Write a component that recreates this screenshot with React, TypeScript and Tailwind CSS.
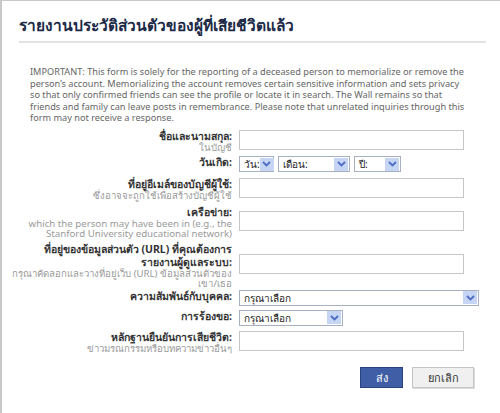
import React from "react";

const FONT = { fontFamily: 'Tahoma, "Noto Sans", "DejaVu Sans", sans-serif' };

function Arrow() {
  return (
    <div className="mr-[1px] flex h-[13px] w-[14px] shrink-0 items-center justify-center bg-[#c6d5f3]">
      <svg width="9" height="6" viewBox="0 0 9 6">
        <path d="M1 1 L4.5 4.5 L8 1" fill="none" stroke="#4d6cc4" strokeWidth="1.8" />
      </svg>
    </div>
  );
}

function Select({ w, text }: { w: string; text: string }) {
  return (
    <div className={`${w} flex h-[16px] items-center justify-between border border-[#a7b0c0] bg-white pl-[4px] text-[10px] leading-none text-[#222]`}>
      <span>{text}</span>
      <Arrow />
    </div>
  );
}

function Input({ w }: { w: string }) {
  return <div className={`${w} h-[20px] border border-[#c6c6c6] bg-white`} />;
}

function Label({ lines, subs, latin }: { lines: string[]; subs?: string[]; latin?: boolean }) {
  return (
    <div className="flex w-[202px] shrink-0 flex-col items-end text-right">
      {lines.map((l) => (
        <div key={l} className="whitespace-nowrap text-[10.5px] font-bold leading-[13px] text-[#333]">
          {l}
        </div>
      ))}
      {subs?.map((s) => (
        <div
          key={s}
          className={`whitespace-nowrap leading-[10.5px] text-[#9a9a9a] ${latin ? "text-[9.7px]" : "text-[9.6px]"}`}
        >
          {s}
        </div>
      ))}
    </div>
  );
}

export default function App() {
  return (
    <div style={FONT} className="h-[413px] w-[500px] overflow-hidden border-l-2 border-t border-[#c8c8c8] bg-white">
      <div className="pl-[17px] pr-[14px] pt-[14px]">
        <h1 className="text-[15.5px] font-bold leading-[20px] text-[#1c2a47]">
          รายงานประวัติส่วนตัวของผู้ที่เสียชีวิตแล้ว
        </h1>
        <div className="mt-[6px] h-[2px] bg-[#e2e2e2]" />
      </div>

      <div className="mt-[23px] pl-[28px] text-[9.2px] leading-[11.6px] text-[#666]">
        <div className="whitespace-nowrap">IMPORTANT: This form is solely for the reporting of a deceased person to memorialize or remove the</div>
        <div className="whitespace-nowrap">person’s account. Memorializing the account removes certain sensitive information and sets privacy</div>
        <div className="whitespace-nowrap">so that only confirmed friends can see the profile or locate it in search. The Wall remains so that</div>
        <div className="whitespace-nowrap">friends and family can leave posts in remembrance. Please note that unrelated inquiries through this</div>
        <div className="whitespace-nowrap">form may not receive a response.</div>
      </div>

      <div className="pl-[28px]">
        <div className="mt-[6px] flex items-start gap-[7px]">
          <Label lines={["ชื่อและนามสกุล:"]} subs={["ในบัญชี"]} />
          <Input w="w-[225px]" />
        </div>

        <div className="mt-[3px] flex items-start gap-[7px]">
          <Label lines={["วันเกิด:"]} />
          <div className="flex gap-[4px]">
            <Select w="w-[35px]" text="วัน:" />
            <Select w="w-[72px]" text="เดือน:" />
            <Select w="w-[47px]" text="ปี:" />
          </div>
        </div>

        <div className="mt-[6px] flex items-start gap-[7px]">
          <Label lines={["ที่อยู่อีเมล์ของบัญชีผู้ใช้:"]} subs={["ซึ่งอาจจะถูกใช้เพื่อสร้างบัญชีผู้ใช้"]} />
          <Input w="w-[225px]" />
        </div>

        <div className="mt-[4px] flex items-start gap-[7px]">
          <Label
            lines={["เครือข่าย:"]}
            subs={["which the person may have been in (e.g., the", "Stanford University educational network)"]}
            latin
          />
          <div className="mt-[5px]">
            <Input w="w-[225px]" />
          </div>
        </div>

        <div className="mt-[3px] flex items-start gap-[7px]">
          <Label
            lines={["ที่อยู่ของข้อมูลส่วนตัว (URL) ที่คุณต้องการ", "รายงานผู้ดูแลระบบ:"]}
            subs={["กรุณาคัดลอกและวางที่อยู่เว็บ (URL) ข้อมูลส่วนตัวของ", "เขา/เธอ"]}
          />
          <div className="mt-[11px]">
            <Input w="w-[225px]" />
          </div>
        </div>

        <div className="mt-[0px] flex items-start gap-[7px]">
          <Label lines={["ความสัมพันธ์กับบุคคล:"]} />
          <Select w="w-[240px]" text="กรุณาเลือก" />
        </div>

        <div className="mt-[4px] flex items-start gap-[7px]">
          <Label lines={["การร้องขอ:"]} />
          <Select w="w-[104px]" text="กรุณาเลือก" />
        </div>

        <div className="mt-[5px] flex items-start gap-[7px]">
          <Label lines={["หลักฐานยืนยันการเสียชีวิต:"]} subs={["ข่าวมรณกรรมหรือบทความข่าวอื่นๆ"]} />
          <Input w="w-[225px]" />
        </div>

        <div className="mt-[13px] flex w-[444px] justify-end gap-[9px]">
          <button className="h-[21px] w-[43px] border border-[#29447e] bg-[#3f5ea6] text-[11px] text-white">
            ส่ง
          </button>
          <button className="h-[21px] w-[62px] border border-[#c4c4c4] bg-[#f0f0f0] text-[11px] text-[#333] shadow-[1px_1px_0_#dcdcdc]">
            ยกเลิก
          </button>
        </div>
      </div>
    </div>
  );
}
